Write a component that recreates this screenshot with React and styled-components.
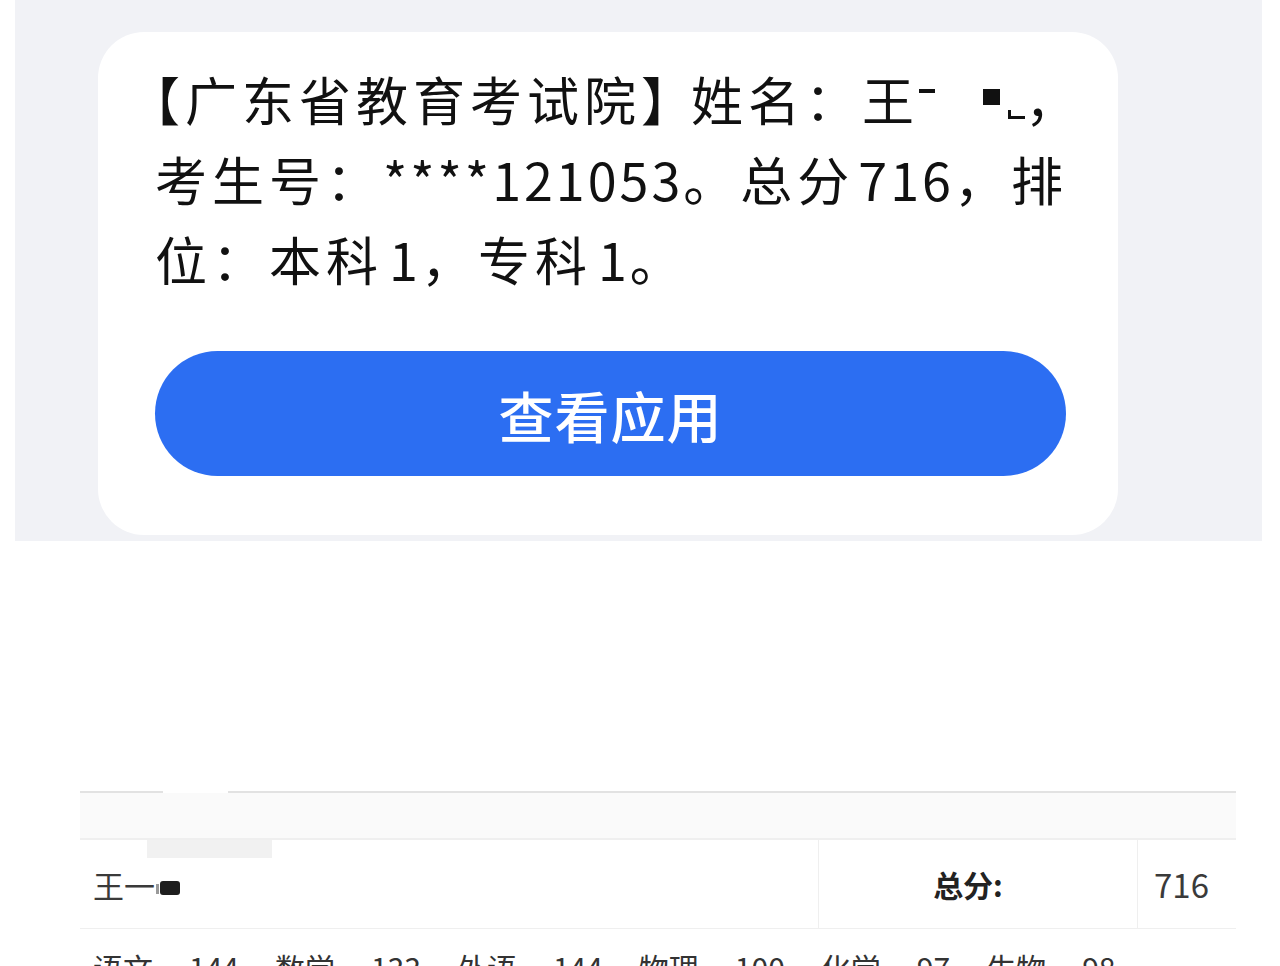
import styled, { createGlobalStyle } from "styled-components";

const GlobalStyle = createGlobalStyle`
  body {
    margin: 0;
    background: #ffffff;
    font-family: "Noto Sans CJK SC", "Noto Sans", sans-serif;
  }
`;

const SmsPanel = styled.section`
  margin: 0 18px 0 15px;
  padding: 32px 144px 6px 83px;
  background: #f1f2f6;
`;

const SmsCard = styled.div`
  background: #ffffff;
  border-radius: 46px;
  padding: 27px 52px 59px 57px;
`;

const Message = styled.p`
  margin: 0 0 52px 0;
  font-size: 52px;
  line-height: 80px;
  letter-spacing: 5px;
  color: #111111;
  white-space: nowrap;
`;

// digits and asterisks run tighter than the han characters
const Num = styled.span`
  letter-spacing: 3px;
  margin-left: ${({ $lead }) => $lead || 0}px;
`;

const OpenBracket = styled.span`
  margin-left: -27px;
`;

const CloseBracket = styled.span`
  letter-spacing: -4px;
  margin-right: 2px;
`;

const Dash = styled.span`
  display: inline-block;
  width: 16px;
  height: 4px;
  background: #111111;
  vertical-align: 28px;
  margin: 0 48px 0 0;
`;

const Block = styled.span`
  display: inline-block;
  width: 17px;
  height: 16px;
  background: #111111;
  vertical-align: 16px;
`;

const Corner = styled.span`
  display: inline-block;
  width: 14px;
  height: 6px;
  border-left: 3px solid #111111;
  border-bottom: 3px solid #111111;
  vertical-align: 2px;
  margin: 0 0 0 8px;
`;

const ActionButton = styled.button`
  display: block;
  width: 100%;
  height: 125px;
  border: none;
  border-radius: 63px;
  background: #2c6ef2;
  color: #ffffff;
  font-family: inherit;
  font-size: 55px;
  font-weight: 500;
  letter-spacing: 1px;
  cursor: pointer;
`;

const Gap = styled.div`
  height: 250px;
`;

const Sheet = styled.div`
  margin-left: 80px;
  width: 1156px;
  color: #333333;
`;

const Rule = styled.div`
  display: flex;
  height: 2px;
`;

const RulePart = styled.div`
  height: 2px;
  background: ${({ $blank }) => ($blank ? "#ffffff" : "#e2e2e2")};
  width: ${({ $w }) => ($w ? `${$w}px` : "auto")};
  flex: ${({ $w }) => ($w ? "none" : "1")};
`;

const Band = styled.div`
  height: 45px;
  background: #fafafa;
  border-bottom: 2px solid #efefef;
`;

const TotalRow = styled.div`
  position: relative;
  display: grid;
  grid-template-columns: 738px 319px 1fr;
  height: 88px;
  border-bottom: 1px solid #efefef;
`;

const Cell = styled.div`
  display: flex;
  align-items: center;
  justify-content: ${({ $center }) => ($center ? "center" : "flex-start")};
  padding: ${({ $pad }) => $pad || "0"};
  border-left: ${({ $line }) => ($line ? "1px solid #efefef" : "none")};
  font-size: ${({ $size }) => $size || "30px"};
  font-weight: ${({ $bold }) => ($bold ? 700 : 400)};
  color: ${({ $bold }) => ($bold ? "#222222" : "#3a3a3a")};
`;

const Smudge = styled.div`
  position: absolute;
  left: 67px;
  top: 0;
  width: 125px;
  height: 18px;
  background: #f1f1f1;
`;

const Tick = styled.span`
  display: inline-block;
  width: 3px;
  height: 10px;
  margin: 10px 0 0 1px;
  background: #9a9a9a;
`;

const Mask = styled.span`
  display: inline-block;
  width: 20px;
  height: 14px;
  margin-left: 1px;
  margin-top: 8px;
  border-radius: 3px;
  background: #1e1e1e;
`;

const ScoreLine = styled.div`
  display: flex;
  gap: 36px;
  padding: 18px 0 0 13px;
  font-size: 30px;
  line-height: 40px;
  color: #333333;
`;

const subjects = [
  ["语文", "144"],
  ["数学", "133"],
  ["外语", "144"],
  ["物理", "100"],
  ["化学", "97"],
  ["生物", "98"],
];

export default function App() {
  return (
    <>
      <GlobalStyle />
      <SmsPanel>
        <SmsCard>
          <Message>
            <OpenBracket>【</OpenBracket>广东省教育考试院
            <CloseBracket>】</CloseBracket>姓名：王
            <Dash />
            <Block />
            <Corner />，
            <br />
            考生号：<Num>****121053</Num>。总分<Num $lead={4}>716</Num>，排
            <br />
            位：本科<Num $lead={6}>1</Num>，专科<Num $lead={6}>1</Num>。
          </Message>
          <ActionButton>查看应用</ActionButton>
        </SmsCard>
      </SmsPanel>
      <Gap />
      <Sheet>
        <Rule>
          <RulePart $w={83} />
          <RulePart $w={65} $blank />
          <RulePart />
        </Rule>
        <Band />
        <TotalRow>
          <Smudge />
          <Cell $pad="0 0 0 13px" $size="31px">
            王一
            <Tick />
            <Mask />
          </Cell>
          <Cell $line $center $bold $pad="0 20px 0 0">
            总分:
          </Cell>
          <Cell $line $size="33px" $pad="0 0 0 16px">
            716
          </Cell>
        </TotalRow>
        <ScoreLine>
          {subjects.map(([name, score]) => [
            <span key={name}>{name}</span>,
            <span key={name + score}>{score}</span>,
          ])}
        </ScoreLine>
      </Sheet>
    </>
  );
}
